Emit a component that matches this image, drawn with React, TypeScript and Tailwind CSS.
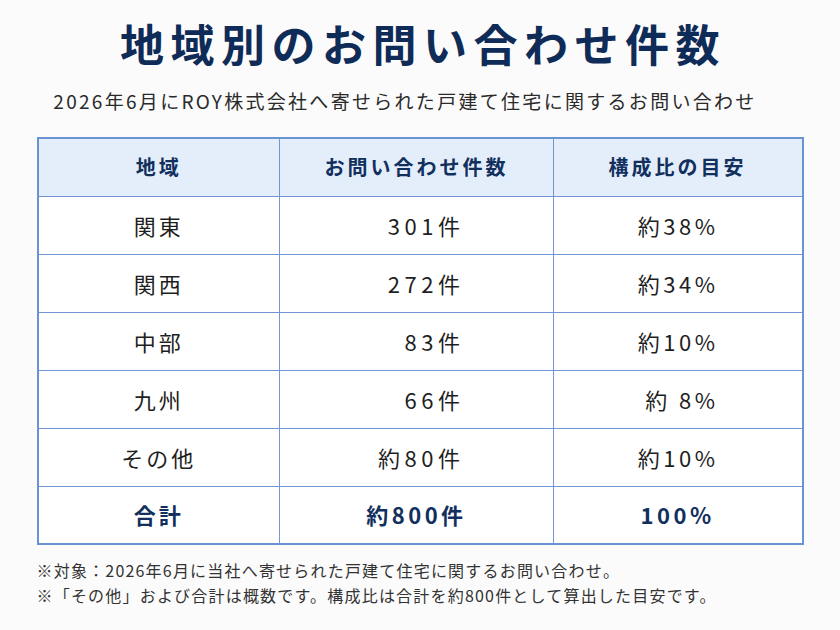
const rows = [
  { area: '関東', count: '301件', ratio: '約38%' },
  { area: '関西', count: '272件', ratio: '約34%' },
  { area: '中部', count: '83件', ratio: '約10%' },
  { area: '九州', count: '66件', ratio: '約 8%' },
  { area: 'その他', count: '約80件', ratio: '約10%' },
];

const cell = 'border border-[#7096d4] text-center';

export default function App() {
  return (
    <div
      className="w-[840px] h-[630px] bg-[#fbfbfb] flex flex-col items-center text-[#1f1f1f]"
      style={{ fontFamily: '"Noto Sans CJK JP", "Noto Sans", sans-serif' }}
    >
      <h1 className="mt-[17px] pl-[6px] text-[44px] leading-[52px] font-bold tracking-[6.5px] text-[#0f2b57]">
        地域別のお問い合わせ件数
      </h1>
      <p className="mt-[19px] mr-[30px] text-[19px] leading-[26px] tracking-[2.3px] text-[#2a2a2a]">
        2026年6月にROY株式会社へ寄せられた戸建て住宅に関するお問い合わせ
      </p>

      <table className="mt-[23px] w-[767px] border-collapse border-2 border-[#6a93d3] text-[22px] tracking-[3px]">
        <thead>
          <tr className="h-[58px] bg-[#e4eefb] text-[#12305e] text-[20px]">
            <th className={`w-[243px] font-bold ${cell}`}>地域</th>
            <th className={`w-[274px] font-bold ${cell}`}>お問い合わせ件数</th>
            <th className={`w-[250px] font-bold ${cell}`}>構成比の目安</th>
          </tr>
        </thead>
        <tbody>
          {rows.map((r) => (
            <tr key={r.area} className="h-[58px] bg-white">
              <td className={cell}>{r.area}</td>
              <td className={cell}>
                <span className="inline-block w-[96px] text-right whitespace-pre tracking-[4.5px]">{r.count}</span>
              </td>
              <td className={cell}>
                <span className="inline-block w-[82px] text-right whitespace-pre tracking-[3.5px]">{r.ratio}</span>
              </td>
            </tr>
          ))}
          <tr className="h-[58px] bg-white font-bold text-[#12305e]">
            <td className={cell}>合計</td>
            <td className={cell}>
              <span className="tracking-[3.5px]">約800件</span>
            </td>
            <td className={cell}>
              <span className="tracking-[3.5px]">100%</span>
            </td>
          </tr>
        </tbody>
      </table>

      <div className="mt-[13px] w-[767px] text-[16px] leading-[25px] text-[#333] tracking-[1.2px]">
        <p>※対象：2026年6月に当社へ寄せられた戸建て住宅に関するお問い合わせ。</p>
        <p>※「その他」および合計は概数です。構成比は合計を約800件として算出した目安です。</p>
      </div>
    </div>
  );
}
